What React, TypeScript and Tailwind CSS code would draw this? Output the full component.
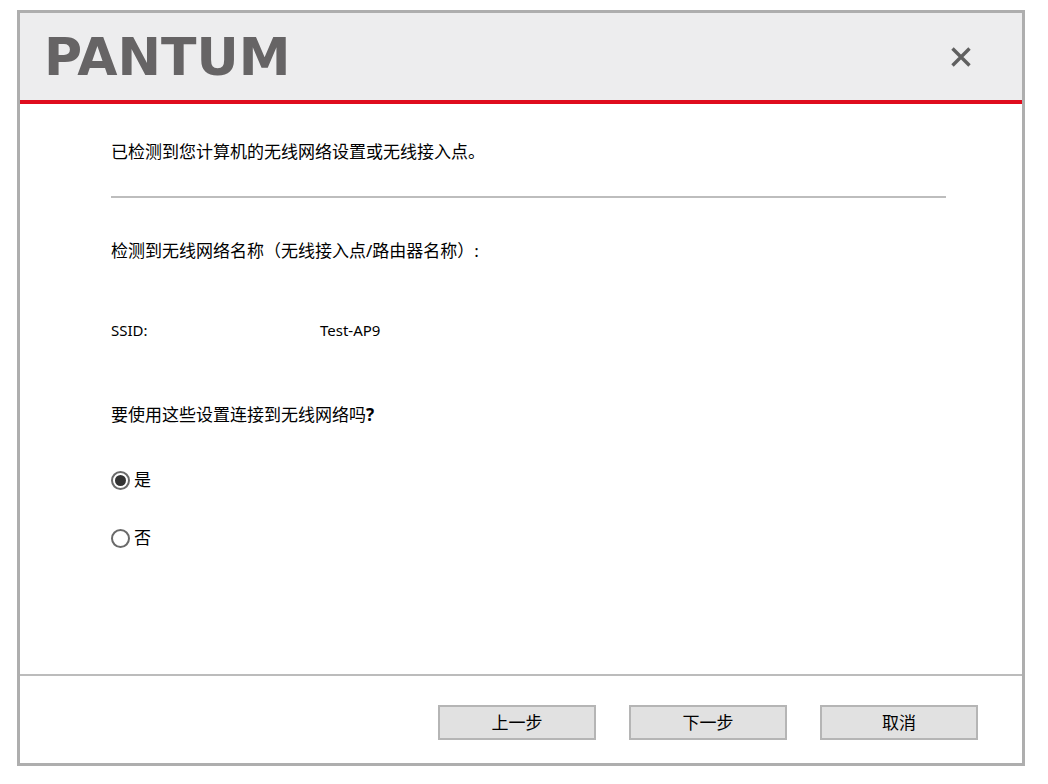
import React, { useState } from "react";

function Choice({ id, label, checked, onSelect }: { id: string; label: string; checked: boolean; onSelect: () => void }) {
  return (
    <div className="flex h-6 items-center gap-1">
      <input
        id={id}
        type="radio"
        name="use-settings"
        checked={checked}
        onChange={onSelect}
        className="grid size-[19px] appearance-none place-items-center rounded-full border-2 border-[#6a6a6a] bg-white before:size-[11px] before:rounded-full before:content-[''] checked:before:bg-[#333333]"
      />
      <label htmlFor={id}>{label}</label>
    </div>
  );
}

function DialogButton({ children }: { children: React.ReactNode }) {
  return (
    <button type="button" className="h-[35px] w-[158px] border-2 border-[#b5b5b5] bg-[#e1e1e1] leading-none hover:bg-[#e8f1fa]">
      {children}
    </button>
  );
}

export default function App() {
  const [useSettings, setUseSettings] = useState(true);

  return (
    <div className="flex min-h-screen flex-col bg-white pt-[10px] pr-[23px] pb-[18px] pl-[17px] font-['Noto_Sans','Noto_Sans_CJK_SC',sans-serif] text-[17px] leading-6 text-black">
      <div className="flex flex-1 flex-col border-3 border-[#aeaeae]">
        <header className="flex h-[91px] items-center justify-between border-b-4 border-[#df0c1d] bg-[#ededee] pr-[49px] pl-6">
          <h1 className="font-['DejaVu_Sans',sans-serif] text-[52px] leading-none font-bold text-[#666465]">PANTUM</h1>
          <button type="button" aria-label="关闭" className="grid size-6 place-items-center text-[#606060]">
            <svg viewBox="0 0 20 20" className="size-5" fill="none" stroke="currentColor" strokeWidth="3.4">
              <path d="M1.5 1.5 18.5 18.5M18.5 1.5 1.5 18.5" />
            </svg>
          </button>
        </header>

        <main className="flex flex-1 flex-col pt-9 pr-[76px] pl-[91px]">
          <p>已检测到您计算机的无线网络设置或无线接入点。</p>
          <hr className="mt-8 border-t-2 border-[#bdbdbd]" />
          <p className="mt-[41px]">检测到无线网络名称（无线接入点/路由器名称）:</p>
          <dl className="mt-[55px] flex text-[15px]">
            <dt className="w-[209px]">SSID:</dt>
            <dd>Test-AP9</dd>
          </dl>
          <fieldset className="mt-[61px]">
            <legend>
              要使用这些设置连接到无线网络吗<b>?</b>
            </legend>
            <div className="mt-[41px] flex flex-col gap-[34px]">
              <Choice id="use-yes" label="是" checked={useSettings} onSelect={() => setUseSettings(true)} />
              <Choice id="use-no" label="否" checked={!useSettings} onSelect={() => setUseSettings(false)} />
            </div>
          </fieldset>
        </main>

        <footer className="flex h-[89px] items-center justify-end gap-[33px] border-t-2 border-[#bcbcbc] pt-1.5 pr-11">
          <DialogButton>上一步</DialogButton>
          <DialogButton>下一步</DialogButton>
          <DialogButton>取消</DialogButton>
        </footer>
      </div>
    </div>
  );
}
